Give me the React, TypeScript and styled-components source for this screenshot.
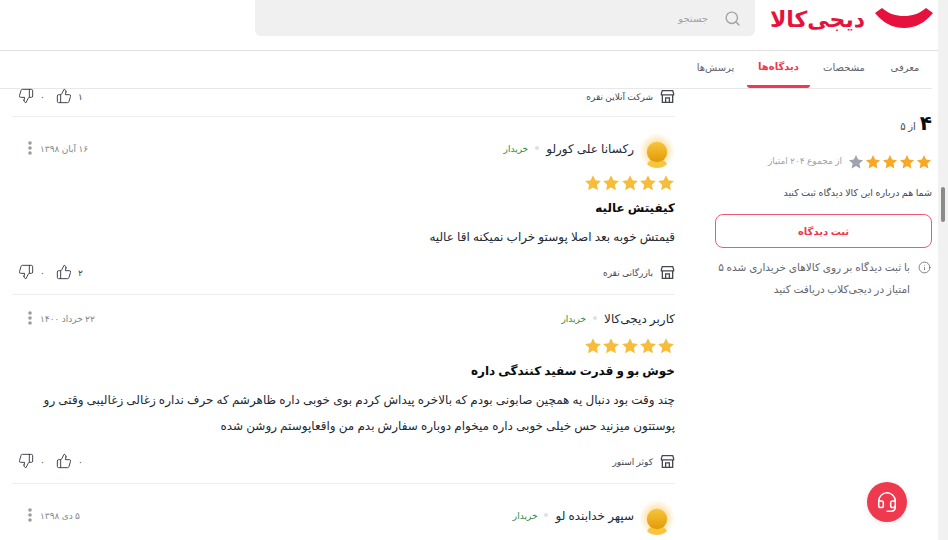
import React from "react";
import styled, { createGlobalStyle } from "styled-components";
import { Search, ThumbsUp, ThumbsDown, Info, Headset } from "lucide-react";

const Global = createGlobalStyle`
  html, body { margin: 0; padding: 0; background: #fff; }
  body { font-family: "Noto Sans", "DejaVu Sans", sans-serif; color: #232933; }
  * { box-sizing: border-box; }
`;

const Frame = styled.div`
  width: 948px; height: 540px; overflow: hidden; display: flex; position: relative; direction: ltr;
`;
const Page = styled.div`
  width: 938px; height: 540px; display: flex; flex-direction: column; direction: rtl; overflow: hidden;
`;
const Track = styled.div`
  width: 10px; height: 540px; background: #f1f1f1; padding: 187px 3px 0;
`;
const Thumb = styled.div`
  width: 4px; height: 35px; border-radius: 2px; background: #8a8a8a;
`;
const Header = styled.header`
  height: 51px; flex: none; display: flex; align-items: flex-start; border-bottom: 1px solid #e0e0e2; padding-right: 5px;
`;
const Logo = styled.div`
  width: 161px; height: 36px; display: flex; align-items: flex-start; gap: 10px;
`;
const Smile = styled.svg`
  width: 58px; height: 22px; margin-top: 6px; flex: none;
`;
const LogoText = styled.span`
  font-size: 22px; line-height: 36px; font-weight: 700; color: #e6123d; white-space: nowrap;
`;
const SearchBox = styled.div`
  width: 500px; height: 36px; margin-right: 17px; background: #f0f0f1; border-radius: 0 0 6px 6px; display: flex; align-items: center; gap: 16px; padding-right: 14px; color: #a1a3a8;
  font-size: 10px;
`;
const Tabs = styled.nav`
  height: 38px; flex: none; display: flex; margin-right: 6px; border-bottom: 1px solid #e8e8ea;
`;
const Tab = styled.div<{ $active?: boolean; $w: number }>`
  width: ${p => p.$w}px; height: 37px; display: flex; align-items: center; justify-content: center; font-size: 10px; padding-bottom: 5px;
  font-weight: ${p => (p.$active ? 700 : 400)}; color: ${p => (p.$active ? "#ef394e" : "#62666d")};
  border-bottom: ${p => (p.$active ? "3px solid #ef394e" : "none")};
  border-radius: 0 0 3px 3px;
`;
const Body = styled.div`
  flex: 1; display: flex; min-height: 0;
`;
const Side = styled.aside`
  width: 217px; margin-right: 6px; flex: none; display: flex; flex-direction: column; padding-top: 23px;
`;
const ScoreLine = styled.div`
  display: flex; align-items: baseline; gap: 4px; height: 22px; font-size: 10px; color: #424750;
`;
const ScoreBig = styled.span`
  font-size: 20px; line-height: 22px; font-weight: 700; color: #0c0c0c;
`;
const RateRow = styled.div`
  display: flex; align-items: center; gap: 6px; margin-top: 18px; height: 20px;
`;
const Muted = styled.span`
  font-size: 9px; color: #a1a3a8; margin-top: -4px;
`;
const Prompt = styled.div`
  margin-top: 11px; font-size: 9.5px; line-height: 20px; color: #424750;
`;
const CommentBtn = styled.button`
  margin-top: 11px; height: 34px; width: 217px; background: #fff; border: 1px solid #ef5a70; border-radius: 8px; color: #ef394e; font: 700 10px "Noto Sans", "DejaVu Sans", sans-serif;
`;
const Note = styled.div`
  margin-top: 8px; display: flex; gap: 8px; padding-right: 1px; color: #62666d;
`;
const NoteText = styled.p`
  margin: 0; width: 196px; font-size: 10.5px; line-height: 22px;
`;
const Main = styled.main`
  width: 663px; margin-right: 40px; margin-top: -1px; flex: none; display: flex; flex-direction: column; overflow: hidden;
`;
const Review = styled.article`
  padding: 16px 0 14px; border-bottom: 1px solid #eeeeef;
  &:first-child { padding-top: 0; padding-bottom: 12px; }
`;
const Head = styled.div<{ $avatar?: boolean }>`
  height: ${p => (p.$avatar ? 36 : 16)}px; display: flex; align-items: center; justify-content: space-between;
  margin-bottom: ${p => (p.$avatar ? 5 : 10)}px;
`;
const Who = styled.div`
  display: flex; align-items: center;
`;
const Avatar = styled.svg`
  width: 36px; height: 36px; margin-left: 5px; flex: none;
`;
const NameLine = styled.div<{ $avatar?: boolean }>`
  display: flex; align-items: center; margin-top: ${p => (p.$avatar ? -6 : -2)}px;
`;
const Name = styled.span`
  font-size: 12px; font-weight: 500; color: #232933;
`;
const Dot = styled.span`
  width: 4px; height: 4px; border-radius: 50%; background: #e0e0e2; margin: 0 7px;
`;
const Buyer = styled.span`
  font-size: 9px; color: #2e8b3d;
`;
const Meta = styled.div<{ $avatar?: boolean }>`
  display: flex; align-items: center; gap: 8px; padding-left: 16px; margin-top: ${p => (p.$avatar ? -6 : -2)}px;
  font-size: 9px; color: #81858b;
`;
const StarRow = styled.div<{ $gap?: number }>`
  height: 17px; display: flex; align-items: center; gap: ${p => p.$gap ?? 1}px;
`;
const Title = styled.h3`
  margin: 8px 0 0; font-size: 12px; line-height: 18px; font-weight: 700; color: #0c0c0c;
`;
const Text = styled.p`
  margin: 7px 0 0; font-size: 12px; line-height: 26px; color: #232933; padding-left: 12px;
`;
const Foot = styled.div`
  height: 16px; margin-top: 14px; display: flex; align-items: center; justify-content: space-between; padding-left: 6px;
  &:first-child { margin-top: 0; }
`;
const Seller = styled.div`
  display: flex; align-items: center; gap: 7px; font-size: 9px; color: #424750;
`;
const Votes = styled.div`
  display: flex; align-items: center; color: #424750; font-size: 9px;
`;
const Vote = styled.span`
  display: flex; align-items: center; gap: 6px; width: 38px;
  &:last-child { width: auto; }
`;
const Fab = styled.div`
  position: absolute; left: 867px; top: 482px; width: 40px; height: 40px; border-radius: 50%; background: #ef394e; color: #fff;
  display: flex; align-items: center; justify-content: center; box-shadow: 0 1px 6px rgba(0,0,0,.1);
`;

const Star: React.FC<{ color: string; size: number }> = ({ color, size }) => (
  <svg width={size} height={size} viewBox="0 0 24 24"><path fill={color} d="M12 1.500l3.200 6.900 7.400.9-5.500 5.100 1.500 7.400L12 18.100l-6.600 3.700 1.500-7.400L1.400 9.300l7.400-.9z" /></svg>
);
const Store = () => (
  <svg width="15" height="15" viewBox="0 0 16 16" fill="none" stroke="#424750" strokeWidth="1.400"><path d="M2.500 1.700h11l1 3v1.600h-13V4.700zM2.500 6.300v8h11v-8M6 14.300V9.500h4v4.800" /></svg>
);
const Dots = () => (
  <svg width="4" height="14" viewBox="0 0 4 14" fill="#9a9ca1"><circle cx="2" cy="2" r="1.800" /><circle cx="2" cy="7" r="1.800" /><circle cx="2" cy="12" r="1.800" /></svg>
);
const Face: React.FC<{ id: string }> = ({ id }) => (
  <Avatar viewBox="0 0 36 36">
    <defs>
      <radialGradient id={`${id}g`}><stop offset=".5" stopColor="#fde3b0" /><stop offset="1" stopColor="#fff" /></radialGradient>
      <linearGradient id={`${id}h`} x1="0" y1="0" x2="0" y2="1"><stop offset="0" stopColor="#f8c53a" /><stop offset="1" stopColor="#e39a08" /></linearGradient>
    </defs>
    <circle cx="18" cy="18" r="18" fill={`url(#${id}g)`} />
    <path d="M8 31c2-4 6-5 10-5s8 1 10 5c-3 3-7 4-10 4s-7-1-10-4z" fill="#f8c63e" />
    <circle cx="18" cy="19" r="10.200" fill={`url(#${id}h)`} />
  </Avatar>
);
const Foots: React.FC<{ seller: string; likes: string }> = ({ seller, likes }) => (
  <Foot>
    <Seller><Store />{seller}</Seller>
    <Votes>
      <Vote>{likes}<ThumbsUp size={16} strokeWidth={1.500} /></Vote>
      <Vote>۰<ThumbsDown size={16} strokeWidth={1.500} /></Vote>
    </Votes>
  </Foot>
);
const Stars = () => (
  <StarRow $gap={0.25}>{[0, 1, 2, 3, 4].map(i => <Star key={i} color="#f7bd3a" size={18} />)}</StarRow>
);

export default function App() {
  return (
    <Frame>
      <Global />
      <Page>
        <Header>
          <Logo>
            <Smile viewBox="0 0 58 22"><path fill="#e6123d" d="M0 7L7 2C14 8 21 10 29 10C37 10 44 8 51 2L58 7C50 17 40 22 29 22C18 22 8 17 0 7Z" /></Smile>
            <LogoText>دیجی‌کالا</LogoText>
          </Logo>
          <SearchBox><Search size={17} />جستجو</SearchBox>
        </Header>
        <Tabs>
          <Tab $w={54}>معرفی</Tab>
          <Tab $w={68}>مشخصات</Tab>
          <Tab $w={63} $active>دیدگاه‌ها</Tab>
          <Tab $w={63}>پرسش‌ها</Tab>
        </Tabs>
        <Body>
          <Side>
            <ScoreLine><ScoreBig>۴</ScoreBig>از ۵</ScoreLine>
            <RateRow>
              <StarRow>
                {[0, 1, 2, 3].map(i => <Star key={i} color="#f9a825" size={16} />)}
                <Star color="#9fa3ad" size={16} />
              </StarRow>
              <Muted>از مجموع ۲۰۴ امتیاز</Muted>
            </RateRow>
            <Prompt>شما هم درباره این کالا دیدگاه ثبت کنید</Prompt>
            <CommentBtn>ثبت دیدگاه</CommentBtn>
            <Note>
              <Info size={13} strokeWidth={1.500} style={{ marginTop: 5, flex: "none" }} />
              <NoteText>با ثبت دیدگاه بر روی کالاهای خریداری شده ۵ امتیاز در دیجی‌کلاب دریافت کنید</NoteText>
            </Note>
          </Side>
          <Main>
            <Review><Foots seller="شرکت آنلاین نقره" likes="۱" /></Review>
            <Review>
              <Head $avatar>
                <Who><Face id="a" /><NameLine $avatar><Name>رکسانا علی کورلو</Name><Dot /><Buyer>خریدار</Buyer></NameLine></Who>
                <Meta $avatar>۱۶ آبان ۱۳۹۸<Dots /></Meta>
              </Head>
              <Stars />
              <Title>کیفیتش عالیه</Title>
              <Text>قیمتش خوبه بعد اصلا پوستو خراب نمیکنه اقا عالیه</Text>
              <Foots seller="بازرگانی نقره" likes="۲" />
            </Review>
            <Review>
              <Head>
                <Who><NameLine><Name>کاربر دیجی‌کالا</Name><Dot /><Buyer>خریدار</Buyer></NameLine></Who>
                <Meta>۲۲ خرداد ۱۴۰۰<Dots /></Meta>
              </Head>
              <Stars />
              <Title>خوش بو و قدرت سفید کنندگی داره</Title>
              <Text>چند وقت بود دنبال یه همچین صابونی بودم که بالاخره پیداش کردم بوی خوبی داره ظاهرشم که حرف نداره زغالی زغالیبی وقتی رو پوستتون میزنید حس خیلی خوبی داره میخوام دوباره سفارش بدم من واقعاپوستم روشن شده</Text>
              <Foots seller="کوثر استور" likes="۰" />
            </Review>
            <Review>
              <Head $avatar>
                <Who><Face id="b" /><NameLine $avatar><Name>سپهر خدابنده لو</Name><Dot /><Buyer>خریدار</Buyer></NameLine></Who>
                <Meta $avatar>۵ دی ۱۳۹۸<Dots /></Meta>
              </Head>
            </Review>
          </Main>
        </Body>
      </Page>
      <Track><Thumb /></Track>
      <Fab><Headset size={22} strokeWidth={1.700} /></Fab>
    </Frame>
  );
}
